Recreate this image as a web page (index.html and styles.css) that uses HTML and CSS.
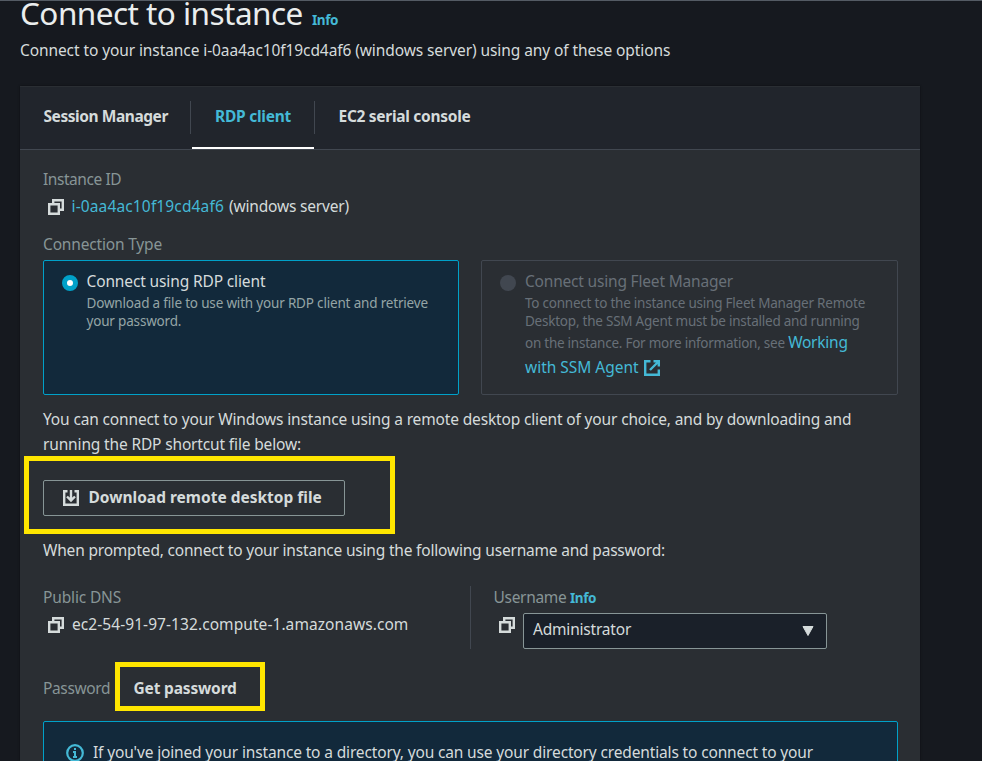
FILE: index.html
```
<!DOCTYPE html>
<html lang="en">
<head>
<meta charset="utf-8">
<title>Connect to instance</title>
<link rel="stylesheet" href="styles.css">
</head>
<body>
<svg class="defs" width="0" height="0">
  <symbol id="copy" viewBox="0 0 16 16">
    <path d="M5.200 4V1.200h9.600v9.600H12" fill="none" stroke="currentColor" stroke-width="2.400"/>
    <path d="M1.200 5.200h9.600v9.600H1.200z" fill="none" stroke="currentColor" stroke-width="2.400"/>
  </symbol>
</svg>
<main class="page">
  <header class="heading">
    <h1>Connect to instance</h1>
    <a class="info">Info</a>
  </header>
  <p class="subtitle">Connect to your instance i-0aa4ac10f19cd4af6 (windows server) using any of these options</p>

  <section class="panel">
    <nav class="tabs">
      <a class="tab tab-session"><span>Session Manager</span></a>
      <a class="tab tab-active"><span>RDP client</span></a>
      <a class="tab tab-serial"><span>EC2 serial console</span></a>
    </nav>
    <div class="content">
      <div class="label label-id">Instance ID</div>
      <div class="value-row">
        <svg class="icon"><use href="#copy"/></svg>
        <a class="link id-link">i-0aa4ac10f19cd4af6</a>
        <span class="id-name">(windows server)</span>
      </div>
      <div class="label label-type">Connection Type</div>
      <div class="cards">
        <div class="card card-selected">
          <span class="radio radio-on"></span>
          <div class="card-text">
            <div class="card-title">Connect using RDP client</div>
            <div class="desc"><span class="d1">Download a file to use with your RDP client and retrieve</span><br><span class="d1">your password.</span></div>
          </div>
        </div>
        <div class="card card-disabled">
          <span class="radio"></span>
          <div class="card-text">
            <div class="card-title title-fleet">Connect using Fleet Manager</div>
            <div class="desc"><span class="d2">To connect to the instance using Fleet Manager Remote</span><br><span class="d2">Desktop, the SSM Agent must be installed and running</span><br><span class="d3">on the instance. For more information, see</span> <a class="link"><span class="working">Working</span><br>with SSM Agent</a><svg class="external" viewBox="0 0 16 16"><path d="M6.500 1.200H1.200v13.600h13.600V9.500M9.500 1.200h5.300v5.300M14.500 1.500L6 10" fill="none" stroke="currentColor" stroke-width="2.400"/></svg></div>
          </div>
        </div>
      </div>
      <p class="intro">You can connect to your Windows instance using a remote desktop client of your choice, and by downloading and<br>running the RDP shortcut file below:</p>
      <div class="download-row">
        <button class="download"><svg class="icon" viewBox="0 0 16 16"><path d="M4.500 1.200H1.200v13.600h13.600V1.200h-3.300M8 0v10M4 6.500l4 4 4-4" fill="none" stroke="currentColor" stroke-width="2.400"/></svg><span>Download remote desktop file</span></button>
        <i class="mark mark-download"></i>
      </div>
      <p class="prompt">When prompted, connect to your instance using the following username and password:</p>
      <div class="details">
        <div class="dns">
          <div class="label">Public DNS</div>
          <div class="value-row">
            <svg class="icon"><use href="#copy"/></svg>
            <span class="dns-name">ec2-54-91-97-132.compute-1.amazonaws.com</span>
          </div>
        </div>
        <div class="user">
          <div class="label user-label"><span>Username</span><a class="info">Info</a></div>
          <div class="user-row">
            <svg class="icon"><use href="#copy"/></svg>
            <div class="select"><span>Administrator</span><svg class="caret" viewBox="0 0 12 10"><path d="M1 .5h10L6 9.500z" fill="currentColor" stroke="currentColor" stroke-linejoin="round"/></svg></div>
          </div>
        </div>
      </div>
      <div class="password">
        <span class="label">Password</span>
        <button class="get"><span>Get password</span><i class="mark mark-get"></i></button>
      </div>
      <div class="alert">
        <svg class="alert-icon" viewBox="0 0 18 18"><circle cx="9" cy="9" r="7.800" fill="none" stroke="currentColor" stroke-width="2.200"/><path d="M8 4h2v2H8zM7 7h3v5h1v2H7v-2h1V9H7z" fill="currentColor"/></svg>
        <span class="alert-text">If you've joined your instance to a directory, you can use your directory credentials to connect to your</span>
      </div>
    </div>
  </section>
</main>
</body>
</html>
```
FILE: styles.css
```
* { box-sizing: border-box; }
html, body { height: 100%; overflow: hidden; }
body {
  margin: 0;
  background: #16191f;
  color: #d5dbdb;
  font: 15.5px/25px "Noto Sans", "Open Sans", sans-serif;
  letter-spacing: -0.13px;
  white-space: nowrap;
}
h1, p { margin: 0; font-weight: 400; }
button { font: inherit; color: inherit; background: none; border: 0; padding: 0; letter-spacing: inherit; }
.defs { position: absolute; }
.page { border-top: 1px solid #545b64; padding-left: 20px; height: 761px; overflow: hidden; }
.heading { display: flex; align-items: baseline; height: 24px; line-height: 24px; }
h1 { font-size: 31.5px; line-height: 24px; letter-spacing: -0.54px; color: #eaeded; width: 292px; }
.info { color: #44b9d6; font-size: 13.5px; font-weight: 700; letter-spacing: -0.4px; }
.link { color: #44b9d6; }
.subtitle { margin-top: 13px; letter-spacing: -0.092px; }

.panel { width: 900px; height: 675px; margin-top: 23px; background: #2a2e33; box-shadow: 0 0 2px rgba(0, 0, 0, .5); }
.tabs { display: flex; height: 64px; background: #21252c; border-top: 1px solid #2a2e33; border-bottom: 1px solid #414750; font-weight: 700; }
.tab { position: relative; height: 62px; padding-top: 17px; }
.tab-session { width: 171px; padding-left: 23.5px; letter-spacing: -0.44px; }
.tab-active { width: 124px; padding-left: 24px; color: #44b9d6; letter-spacing: -0.24px; }
.tab-serial { padding-left: 23.5px; letter-spacing: -0.29px; }
.tab-session::before, .tab-active::before { content: ""; position: absolute; right: 0; top: 14px; width: 1px; height: 33px; background: #414750; }
.tab-active::after { content: ""; position: absolute; left: 1px; right: 1px; bottom: 0; height: 2px; background: #fff; }

.content { padding: 17px 22px 0 23px; }
.label { color: #879596; }
.label-id { letter-spacing: -0.44px; }
.value-row { display: flex; align-items: center; margin-top: 2px; padding-left: 5px; }
.icon { width: 16px; height: 16px; flex: none; }
.id-link { margin-left: 7.5px; width: 157.5px; letter-spacing: .14px; }
.id-name { letter-spacing: -0.18px; }
.label-type { margin-top: 13px; letter-spacing: -0.17px; }
.cards { display: flex; justify-content: space-between; margin-top: 3px; }
.card { display: flex; width: 416px; height: 135px; padding: 8px 0 0 18px; border: 1px solid #414750; border-radius: 2px; }
.card:last-child { width: 417px; }
.card-selected { background: #12293b; border-color: #00a1c9; }
.card-disabled { color: #687078; }
.radio { width: 16px; height: 16px; margin: 6px 9px 0 0; border-radius: 50%; background: #414750; flex: none; }
.radio-on { border: 5px solid #00a1c9; background: #fff; margin-right: 8.5px; }
.card-title { letter-spacing: -0.13px; }
.title-fleet { letter-spacing: -0.19px; }
.desc { font-size: 13.5px; line-height: 18px; color: #95a5a6; }
.card-disabled .desc { color: #687078; }
.d1 { letter-spacing: -0.18px; }
.d2 { letter-spacing: -0.23px; }
.d3 { letter-spacing: -0.25px; }
.desc .link { font-size: 15.5px; line-height: 25px; letter-spacing: -0.02px; }
.desc .working { letter-spacing: -0.25px; }
.external { width: 16px; height: 16px; margin-left: 5.5px; vertical-align: -3px; color: #44b9d6; }
.intro { margin-top: 12px; letter-spacing: -0.15px; }
.download-row { position: relative; height: 36px; margin-top: 23px; }
.download { display: flex; align-items: center; width: 302px; height: 36px; padding-left: 19px; border: 1px solid #879596; border-radius: 2px; font-weight: 700; letter-spacing: 0; }
.download span { margin: -2px 0 0 9.5px; }
.mark { position: absolute; border: 5px solid #ffe600; }
.mark-download { left: -19.5px; top: -24px; width: 371px; height: 78px; }
.prompt { margin-top: 22px; letter-spacing: -0.192px; }
.details { display: flex; margin-top: 23px; height: 63px; }
.dns { width: 428px; border-right: 1px solid #414750; }
.dns > .label, .user > .label { margin-top: -1px; }
.dns > .label { letter-spacing: -0.15px; }
.dns-name { margin-left: 8px; letter-spacing: .07px; }
.user { padding-left: 22.5px; }
.user-label { display: flex; align-items: baseline; letter-spacing: -.3px; }
.user-label span { width: 76.5px; }
.user-row { display: flex; margin-top: 2px; padding-left: 5.5px; }
.user-row .icon { margin-top: 4px; }
.select { display: flex; justify-content: space-between; align-items: center; width: 304px; height: 36px; margin-left: 8px; padding: 0 12px 3px 9px; border: 1px solid #879596; border-radius: 2px; background: #1a2029; letter-spacing: -.2px; }
.caret { width: 12px; height: 10px; margin-top: 3px; }
.password { display: flex; margin-top: 27px; }
.password .label { width: 90.5px; letter-spacing: -0.36px; }
.get { position: relative; font-weight: 700; letter-spacing: -0.17px; }
.mark-get { left: -18.5px; top: -14px; width: 150px; height: 49px; }
.alert { display: flex; height: 80px; margin-top: 20px; padding: 18px 0 0 22px; border: 1px solid #00a1c9; border-radius: 2px; background: #12293b; }
.alert-icon { width: 18px; height: 18px; margin: 3.500px 9px 0 0; color: #44b9d6; }
.alert-text { letter-spacing: -0.148px; }
```
